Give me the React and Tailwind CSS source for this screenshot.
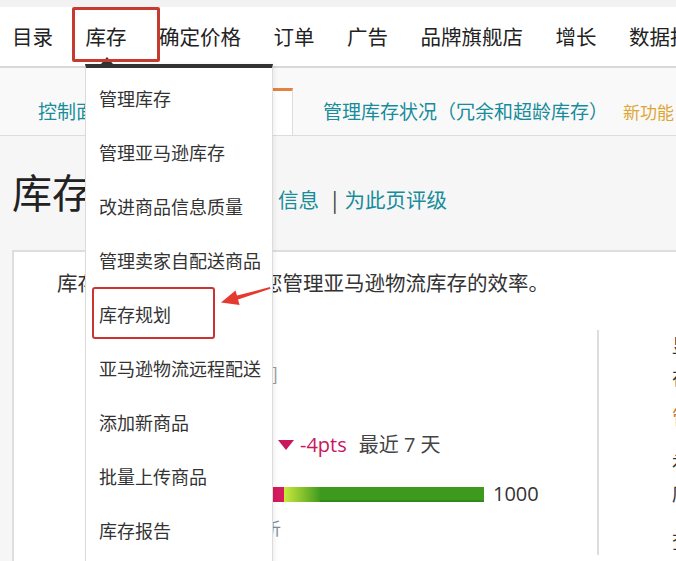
import React from 'react';

const navItems = ['目录', '库存', '确定价格', '订单', '广告', '品牌旗舰店', '增长', '数据报告'];

const menuItems = [
    '管理库存',
    '管理亚马逊库存',
    '改进商品信息质量',
    '管理卖家自配送商品',
    '库存规划',
    '亚马逊物流远程配送',
    '添加新商品',
    '批量上传商品',
    '库存报告',
];

function InventoryMenu() {
    return (
        <>
            {/* caret above the menu */}
            <div className="absolute left-[101px] top-[57px] w-0 h-0 border-x-[6px] border-x-transparent border-b-[7px] border-b-[#333]" />
            <div className="absolute left-[85px] top-[64px] w-[188px] h-[520px] bg-white border-t-4 border-t-[#333] border-x border-x-[#dcdcdc] shadow-[2px_0_4px_rgba(0,0,0,0.06)] pt-[3px]">
                {menuItems.map((item) => (
                    <div key={item} className="h-[54px] flex items-center pl-[13px] text-[18px] text-[#333] whitespace-nowrap">
                        {item}
                    </div>
                ))}
            </div>
        </>
    );
}

function Annotations() {
    return (
        <>
            <div className="absolute left-[72px] top-[7px] w-[88px] h-[55px] border-[3px] border-[#c63a2f] rounded-[2px]" />
            <div className="absolute left-[92px] top-[287px] w-[123px] h-[52px] border-[2.5px] border-[#cc3434] rounded-[3px]" />
            <svg className="absolute left-[215px] top-[280px]" width="60" height="30" viewBox="0 0 60 30">
                <polygon
                    points="6,22.5 20.5,10.5 22,15.6 55,7 55.4,8.8 23,19.6 24.6,25"
                    fill="#e53a2f"
                />
            </svg>
        </>
    );
}

export default function App() {
    return (
        <div className="relative w-[676px] h-[561px] overflow-hidden bg-[#f6f6f6] font-['Noto_Sans_CJK_SC',sans-serif] text-[#333]">
            <div className="h-[7px] bg-[#f2f2f2]" />

            {/* main navigation */}
            <nav className="h-[61px] bg-white border-b-2 border-[#d8d8d8] flex items-center pl-[12px] gap-[32.5px] text-[20.5px] text-[#222] whitespace-nowrap">
                {navItems.map((item) => (
                    <span key={item}>{item}</span>
                ))}
            </nav>

            {/* tabs */}
            <div className="h-[68px] bg-[#f9f9f9] border-b border-[#dddddd] flex items-end pl-[38px] whitespace-nowrap">
                <div className="h-[47px] flex items-center text-[19px] text-[#178c9b]">控制面板</div>
                <div className="ml-[26px] w-[153px] h-[47px] bg-white border-t-[3px] border-t-[#e3833f] border-r border-r-[#dddddd] flex items-center justify-center text-[19px] text-[#333]">
                    库存规划
                </div>
                <div className="h-[47px] flex items-center pl-[30px]">
                    <span className="text-[19px] text-[#178c9b]">管理库存状况（冗余和超龄库存）</span>
                    <span className="ml-[15px] text-[17px] text-[#dea637]">新功能</span>
                </div>
            </div>

            {/* page heading */}
            <div className="h-[114px] flex items-center pl-[12px] whitespace-nowrap">
                <div className="flex items-baseline">
                    <h1 className="text-[40px] leading-none text-[#222]">库存规划</h1>
                    <div className="ml-[18px] text-[20.5px]">
                        <span className="text-[#178c9b]">了解更多</span>
                        <span className="ml-[6px] text-[#178c9b]">信息</span>
                        <span className="ml-[13px] mr-[7px] text-[#333]">|</span>
                        <span className="text-[#178c9b]">为此页评级</span>
                    </div>
                </div>
            </div>

            {/* card */}
            <div className="ml-[12px] w-[700px] h-[330px] bg-white border-2 border-[#dedede]">
                <p className="pt-[15px] pl-[43px] leading-[30px] text-[20.5px] text-[#333] whitespace-nowrap">
                    库存规划可以帮助提高您管理亚马逊物流库存的效率。
                </p>

                <div className="mt-[33px] flex">
                    <div className="w-[583px] shrink-0 flex flex-col whitespace-nowrap">
                        <div className="mt-[28px] h-[30px] flex items-center pl-[86px]">
                            <span className="w-[172px] text-[18px]">库存绩效指数</span>
                            <span className="text-[18px] text-[#999]">]</span>
                        </div>

                        <div className="mt-[42px] h-[30px] flex items-center pl-[86px] font-['Open_Sans','Noto_Sans_CJK_SC',sans-serif]">
                            <span className="w-[178px] text-[20px]">412</span>
                            <span className="w-0 h-0 border-x-[8px] border-x-transparent border-t-[10px] border-t-[#c8175d]" />
                            <span className="ml-[6px] text-[20px] text-[#c8175d]">-4pts</span>
                            <span className="ml-[12px] text-[20px] text-[#444]">最近 7 天</span>
                        </div>

                        <div className="mt-[19px] h-[30px] flex items-center pl-[86px] font-['Open_Sans','Noto_Sans_CJK_SC',sans-serif]">
                            <div className="w-[384px] h-[15px] flex">
                                <div className="w-[184px] bg-[#d61a5e]" />
                                <div className="w-[36px] bg-gradient-to-r from-[#c8ea3c] to-[#3f9c1f]" />
                                <div className="flex-1 bg-[#3d9a1d] border-b-2 border-[#2f8a17]" />
                            </div>
                            <span className="ml-[9px] text-[20px] text-[#333]">1000</span>
                        </div>

                        <div className="mt-[4px] h-[30px] flex items-center pl-[86px]">
                            <span className="w-[181px] text-right text-[17px] text-[#888]">查看分析</span>
                        </div>
                    </div>

                    <div className="shrink-0 h-[225px] border-l-2 border-[#dddddd]" />

                    <div className="shrink-0 pl-[73px] text-[19px] text-[#333] whitespace-nowrap flex flex-col">
                        <span className="mt-[2px] leading-[26px]">显示库存</span>
                        <span className="mt-[6px] leading-[26px]">在售商品</span>
                        <span className="mt-[14px] leading-[26px] text-[#c9773a]">管理冗余</span>
                        <span className="mt-[20px] leading-[26px]">补充库存</span>
                        <span className="mt-[4px] leading-[26px]">库存周转</span>
                        <span className="mt-[22px] leading-[26px]">查看详情</span>
                    </div>
                </div>
            </div>

            <InventoryMenu />
            <Annotations />
        </div>
    );
}
